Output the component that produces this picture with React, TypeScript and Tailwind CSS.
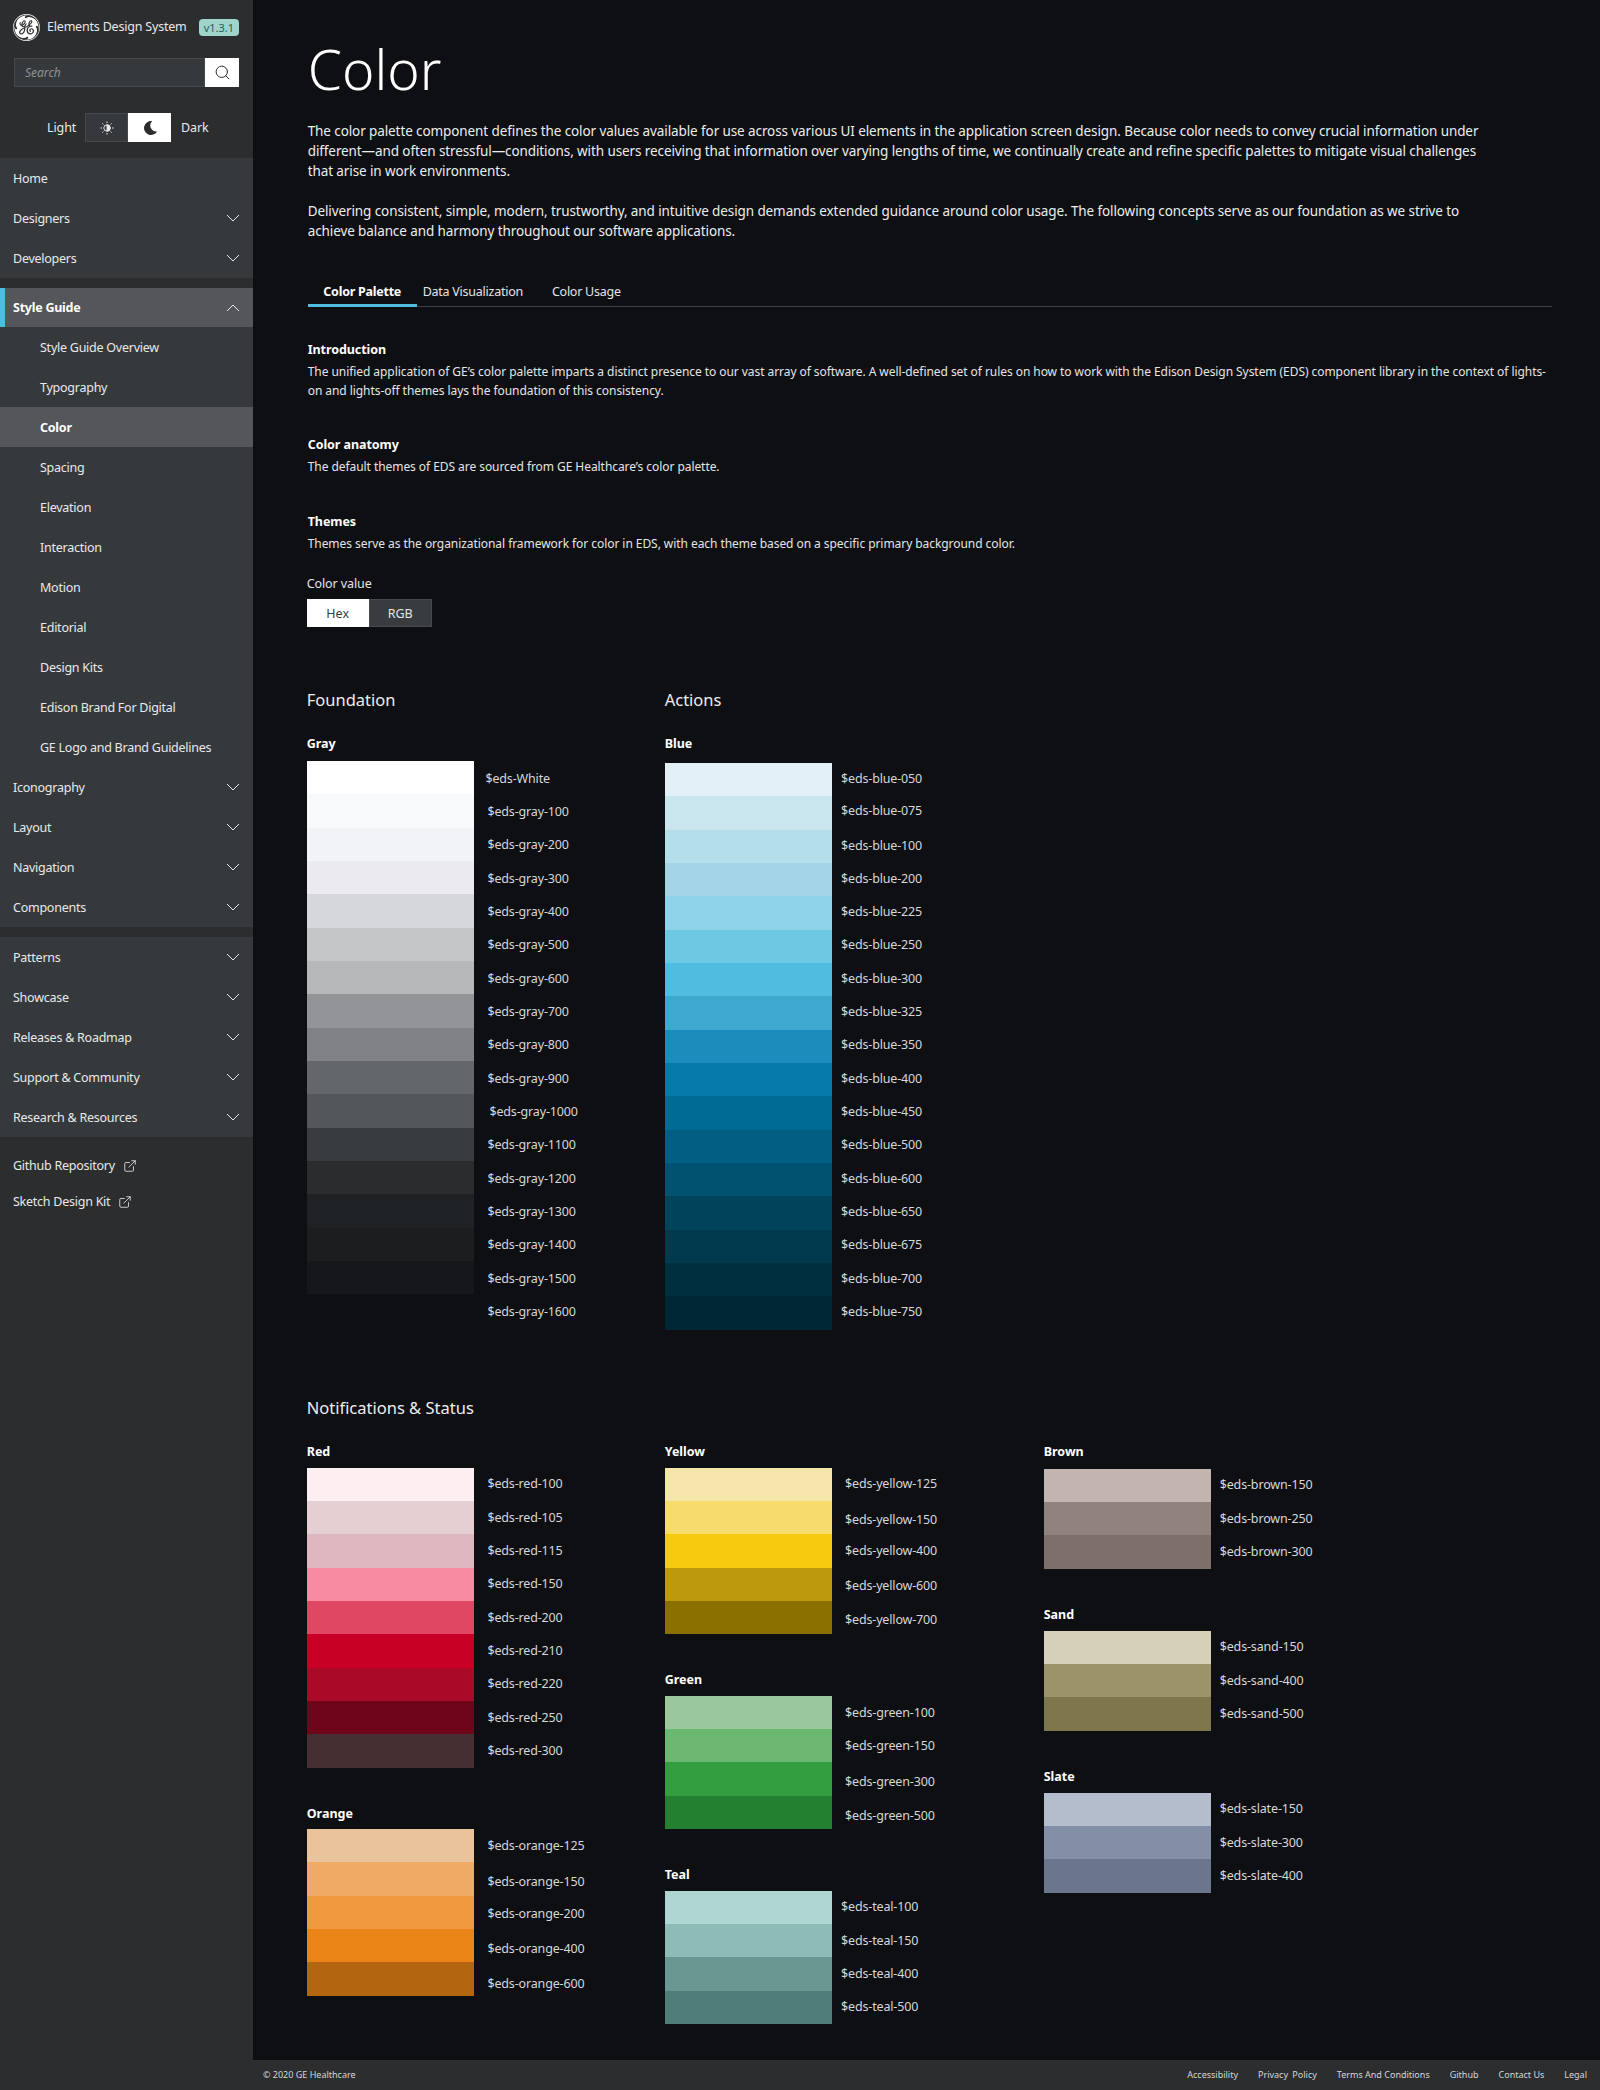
import { ExternalLink, Search } from "lucide-react";
import { SiGeneralelectric } from "react-icons/si";

type Row = [string, string, string?];

const font = "font-['Noto_Sans',sans-serif]";

function Chevron({ up }: { up?: boolean }) {
	return (
		<svg width="14" height="8" viewBox="0 0 14 8" fill="none" stroke="#e6e7e8" strokeWidth="1" className={up ? "rotate-180" : ""}>
			<path d="M1 1 L7 7 L13 1" />
		</svg>
	);
}

function NavRow({ label, open, arrow = true }: { label: string; open?: boolean; arrow?: boolean }) {
	return (
		<div className="flex h-10 items-center justify-between pl-[13px] pr-[13px] text-[12.5px] tracking-[-0.25px] text-[#e8e9ea]">
			<span className="pt-[2px]">{label}</span>
			{arrow && <Chevron up={open} />}
		</div>
	);
}

function SubRow({ label, active }: { label: string; active?: boolean }) {
	return <div className={active ? "flex h-10 items-center bg-[#54565a] pl-10 pt-[2px] text-[12.5px] font-bold tracking-[-0.25px] text-white" : "flex h-10 items-center pl-10 pt-[2px] text-[12.5px] tracking-[-0.25px] text-[#e8e9ea]"}>{label}</div>;
}

function Sidebar() {
	return (
		<aside className="w-[253px] shrink-0 bg-[#2b2d2f]">
			<div className="flex h-[54px] items-center pl-[13px] pr-[14px]">
				<SiGeneralelectric className="size-[27px] text-white" />
				<span className="ml-[7px] text-[12.5px] tracking-[-0.2px] text-[#e8e9ea]">Elements Design System</span>
				<span className="ml-auto rounded-[4px] bg-[#9fd4cd] px-[5px] text-[11px] leading-[17px] text-[#2c5c58]">v1.3.1</span>
			</div>
			<div className="mx-[14px] mt-1 flex h-[29px]">
				<div className="flex flex-1 items-center border border-[#46494c] bg-[#35393c] pl-[10px] text-[12px] italic text-[#8f9295]">Search</div>
				<div className="flex w-[34px] items-center justify-center bg-white">
					<Search size={17} strokeWidth={1.4} className="text-[#2b2d2f]" />
				</div>
			</div>
			<div className="mt-[26px] flex h-[29px] items-center text-[12.5px] tracking-[-0.1px] text-[#e8e9ea]">
				<span className="ml-[47px] w-[38px] pt-px">Light</span>
				<div className="flex h-[29px] w-[43px] items-center justify-center border border-[#46494c] bg-[#35393c]">
					<svg width="14" height="14" viewBox="0 0 14 14" fill="none" stroke="#e8e9ea" strokeWidth="1">
						<circle cx="7" cy="7" r="3.2" />
						<path d="M7 3.8 A3.2 3.2 0 0 1 7 10.2 Z" fill="#e8e9ea" />
						<path d="M7 0.5 V2 M7 12 V13.5 M0.5 7 H2 M12 7 H13.5 M2.4 2.4 L3.4 3.4 M10.6 10.6 L11.6 11.6 M2.4 11.6 L3.4 10.6 M10.6 3.4 L11.6 2.4" />
					</svg>
				</div>
				<div className="flex h-[29px] w-[43px] items-center justify-center bg-white">
					<svg width="16" height="16" viewBox="0 0 14 14" fill="#2b2d2f">
						<path d="M8.8 1 A6.1 6.1 0 1 0 13.2 10 A5.3 5.3 0 0 1 8.8 1 Z" />
					</svg>
				</div>
				<span className="ml-[10px] pt-px">Dark</span>
			</div>
			<div className="mt-4 bg-[#35393c]">
				<NavRow label="Home" arrow={false} />
				<NavRow label="Designers" />
				<NavRow label="Developers" />
			</div>
			<div className="mt-[10px] bg-[#35393c]">
				<div className="flex h-[39px] items-center justify-between border-l-[5px] border-[#4fbce0] bg-[#54565a] pl-2 pr-[13px] text-[12.5px] font-bold tracking-[-0.25px] text-white">
					<span className="pt-[2px]">Style Guide</span>
					<Chevron up />
				</div>
				<SubRow label="Style Guide Overview" />
				<SubRow label="Typography" />
				<SubRow label="Color" active />
				<SubRow label="Spacing" />
				<SubRow label="Elevation" />
				<SubRow label="Interaction" />
				<SubRow label="Motion" />
				<SubRow label="Editorial" />
				<SubRow label="Design Kits" />
				<SubRow label="Edison Brand For Digital" />
				<SubRow label="GE Logo and Brand Guidelines" />
				<NavRow label="Iconography" />
				<NavRow label="Layout" />
				<NavRow label="Navigation" />
				<NavRow label="Components" />
			</div>
			<div className="mt-[10px] bg-[#35393c]">
				<NavRow label="Patterns" />
				<NavRow label="Showcase" />
				<NavRow label="Releases & Roadmap" />
				<NavRow label="Support & Community" />
				<NavRow label="Research & Resources" />
			</div>
			<div className="flex flex-col pl-[13px] pt-[11px] text-[12.5px] tracking-[-0.25px] text-[#e8e9ea]">
				<div className="flex h-[36px] items-center gap-2">
					Github Repository <ExternalLink size={14} strokeWidth={1.4} />
				</div>
				<div className="flex h-[36px] items-center gap-2">
					Sketch Design Kit <ExternalLink size={14} strokeWidth={1.4} />
				</div>
			</div>
		</aside>
	);
}

function Palette({ title, rows, className = "", swatchTop = "mt-[5.5px]", gap = "ml-[13.7px]", labelsUp = "" }: { title: string; rows: Row[]; className?: string; swatchTop?: string; gap?: string; labelsUp?: string }) {
	return (
		<section className={className}>
			<h4 className="h-5 text-[12.5px] font-bold leading-5 text-white">{title}</h4>
			<div className={`flex ${swatchTop}`}>
				<div className="w-[167px] shrink-0">
					{rows.map((r) => (
						<div key={r[1]} className={`h-[33.33px] ${r[0]}`} />
					))}
				</div>
				<div className={`${gap} ${labelsUp}`}>
					{rows.map((r) => (
						<div key={r[1]} className={`flex h-[33.33px] items-center whitespace-nowrap pt-px text-[12.5px] tracking-[-0.15px] text-[#d6d7d9] ${r[2] ?? ""}`}>
							{r[1]}
						</div>
					))}
				</div>
			</div>
		</section>
	);
}

const gray: Row[] = [
	["bg-[#ffffff]", "$eds-White", "-ml-[2px]"],
	["bg-[#f8f9fb]", "$eds-gray-100"],
	["bg-[#f2f3f6]", "$eds-gray-200"],
	["bg-[#ebebef]", "$eds-gray-300"],
	["bg-[#d6d7da]", "$eds-gray-400"],
	["bg-[#c5c6c8]", "$eds-gray-500"],
	["bg-[#b7b8ba]", "$eds-gray-600"],
	["bg-[#929497]", "$eds-gray-700"],
	["bg-[#808285]", "$eds-gray-800"],
	["bg-[#63666a]", "$eds-gray-900"],
	["bg-[#53565a]", "$eds-gray-1000", "ml-[2px]"],
	["bg-[#393c3f]", "$eds-gray-1100"],
	["bg-[#2a2c2e]", "$eds-gray-1200"],
	["bg-[#1f2224]", "$eds-gray-1300"],
	["bg-[#1b1d1f]", "$eds-gray-1400"],
	["bg-[#16171a]", "$eds-gray-1500"],
	["bg-[#0e0f12]", "$eds-gray-1600"],
];

const blue: Row[] = [
	["bg-[#e3f0f7]", "$eds-blue-050"],
	["bg-[#c9e6ef]", "$eds-blue-075", "-translate-y-[1px]"],
	["bg-[#b3deea]", "$eds-blue-100", "translate-y-[1px]"],
	["bg-[#a4d5e6]", "$eds-blue-200"],
	["bg-[#8ed3ea]", "$eds-blue-225"],
	["bg-[#6dc8e4]", "$eds-blue-250"],
	["bg-[#4fbce0]", "$eds-blue-300"],
	["bg-[#3ea8cf]", "$eds-blue-325"],
	["bg-[#1b8cbb]", "$eds-blue-350"],
	["bg-[#057bab]", "$eds-blue-400"],
	["bg-[#006c96]", "$eds-blue-450"],
	["bg-[#005f82]", "$eds-blue-500"],
	["bg-[#005370]", "$eds-blue-600"],
	["bg-[#00435a]", "$eds-blue-650"],
	["bg-[#00384d]", "$eds-blue-675"],
	["bg-[#002f40]", "$eds-blue-700"],
	["bg-[#002736]", "$eds-blue-750"],
];

const red: Row[] = [
	["bg-[#fdeef1]", "$eds-red-100"],
	["bg-[#e6cfd3]", "$eds-red-105"],
	["bg-[#dfb8bf]", "$eds-red-115"],
	["bg-[#f78ca0]", "$eds-red-150"],
	["bg-[#e04763]", "$eds-red-200"],
	["bg-[#c80025]", "$eds-red-210"],
	["bg-[#a80a27]", "$eds-red-220"],
	["bg-[#6e0519]", "$eds-red-250"],
	["bg-[#452f33]", "$eds-red-300"],
];

const orange: Row[] = [
	["bg-[#e8c39c]", "$eds-orange-125"],
	["bg-[#efaa65]", "$eds-orange-150", "translate-y-[2.5px]"],
	["bg-[#f0993f]", "$eds-orange-200", "translate-y-[2px]"],
	["bg-[#ea8416]", "$eds-orange-400", "translate-y-[3px]"],
	["bg-[#b36510]", "$eds-orange-600", "translate-y-[5px]"],
];

const yellow: Row[] = [
	["bg-[#f5e7a9]", "$eds-yellow-125"],
	["bg-[#f7dc6d]", "$eds-yellow-150", "translate-y-[2px]"],
	["bg-[#f6cb0f]", "$eds-yellow-400"],
	["bg-[#bd9a09]", "$eds-yellow-600", "translate-y-[2px]"],
	["bg-[#8b7000]", "$eds-yellow-700", "translate-y-[2px]"],
];

const green: Row[] = [
	["bg-[#9ac89c]", "$eds-green-100"],
	["bg-[#6bb871]", "$eds-green-150"],
	["bg-[#339e40]", "$eds-green-300", "translate-y-[3px]"],
	["bg-[#238030]", "$eds-green-500", "translate-y-[4px]"],
];

const teal: Row[] = [
	["bg-[#b0d6d4]", "$eds-teal-100"],
	["bg-[#8dbcb8]", "$eds-teal-150"],
	["bg-[#699792]", "$eds-teal-400"],
	["bg-[#4f7d79]", "$eds-teal-500"],
];

const brown: Row[] = [
	["bg-[#c2b5af]", "$eds-brown-150"],
	["bg-[#90827d]", "$eds-brown-250"],
	["bg-[#7f6f6a]", "$eds-brown-300"],
];

const sand: Row[] = [
	["bg-[#d6d0b8]", "$eds-sand-150"],
	["bg-[#9c9468]", "$eds-sand-400"],
	["bg-[#7f774c]", "$eds-sand-500"],
];

const slate: Row[] = [
	["bg-[#b4bdcc]", "$eds-slate-150"],
	["bg-[#838fa6]", "$eds-slate-300"],
	["bg-[#69768c]", "$eds-slate-400"],
];

function Intro() {
	return (
		<>
			<h1 className="mt-9 h-[66px] pl-px text-[55px] font-light leading-[66px] text-white">Color</h1>
			<p className="mt-[19px] whitespace-nowrap pl-px text-[13.5px] leading-5 tracking-[-0.1px] text-[#eceded]">
				The color palette component defines the color values available for use across various UI elements in the application screen design. Because color needs to convey crucial information under
				<br />
				different—and often stressful—conditions, with users receiving that information over varying lengths of time, we continually create and refine specific palettes to mitigate visual challenges
				<br />
				that arise in work environments.
			</p>
			<p className="mt-5 whitespace-nowrap pl-px text-[13.5px] leading-5 tracking-[-0.1px] text-[#eceded]">
				Delivering consistent, simple, modern, trustworthy, and intuitive design demands extended guidance around color usage. The following concepts serve as our foundation as we strive to
				<br />
				achieve balance and harmony throughout our software applications.
			</p>
			<div className="ml-px mt-[31px] flex h-[35px] items-stretch border-b border-[#3e4044] text-[12.5px] tracking-[-0.25px] text-[#e4e5e6]">
				<div className="-mb-px flex w-[109px] items-center justify-center border-b-[3px] border-[#4fbce0] pt-[9px] font-bold text-white">Color Palette</div>
				<div className="ml-1.5 flex items-center pt-[6px]">Data Visualization</div>
				<div className="ml-[29px] flex items-center pt-[6px]">Color Usage</div>
			</div>
			<div className="ml-px whitespace-nowrap text-[12px] tracking-[-0.06px] text-[#e4e5e6]">
				<h3 className="mt-[33px] h-5 text-[12.5px] font-bold leading-5 text-white">Introduction</h3>
				<p className="mt-[1.5px] leading-[19px]">
					The unified application of GE’s color palette imparts a distinct presence to our vast array of software. A well-defined set of rules on how to work with the Edison Design System (EDS) component library in the context of lights-
					<br />
					on and lights-off themes lays the foundation of this consistency.
				</p>
				<h3 className="mt-[35.5px] h-5 text-[12.5px] font-bold leading-5 text-white">Color anatomy</h3>
				<p className="mt-[1.5px] leading-[19px]">The default themes of EDS are sourced from GE Healthcare’s color palette.</p>
				<h3 className="mt-[36.5px] h-5 text-[12.5px] font-bold leading-5 text-white">Themes</h3>
				<p className="mt-[1.5px] leading-[19px]">Themes serve as the organizational framework for color in EDS, with each theme based on a specific primary background color.</p>
			</div>
			<div className="mt-[21.5px] h-5 text-[12.5px] leading-5 tracking-[-0.1px] text-[#e4e5e6]">Color value</div>
			<div className="mt-[5px] flex h-7 w-[125px] text-[12.5px]">
				<div className="flex w-[62px] items-center justify-center bg-white pt-[2px] text-[#393c3f]">Hex</div>
				<div className="flex w-[63px] items-center justify-center border border-[#46494c] bg-[#393c3f] pt-[2px] text-[#e4e5e6]">RGB</div>
			</div>
		</>
	);
}

export default function App() {
	return (
		<div className={`flex min-h-[2090px] bg-[#0e0f12] ${font}`}>
			<Sidebar />
			<div className="flex min-w-0 flex-1 flex-col">
				<main className="flex-1 pl-[53.7px] pr-12">
					<Intro />
					<div className="mt-[61px] flex">
						<div className="w-[358px]">
							<h2 className="h-6 text-[16.5px] leading-6 text-[#eceded]">Foundation</h2>
							<Palette className="mt-[22px]" title="Gray" rows={gray} swatchTop="mt-[7px]" labelsUp="mt-[1px]" />
						</div>
						<div>
							<h2 className="h-6 text-[16.5px] leading-6 text-[#eceded]">Actions</h2>
							<Palette className="mt-[22px]" title="Blue" rows={blue} swatchTop="mt-[9px]" gap="ml-[9.3px]" labelsUp="-mt-[1px]" />
						</div>
					</div>
					<h2 className="mt-[66px] h-6 text-[16.5px] leading-6 text-[#eceded]">Notifications &amp; Status</h2>
					<div className="mt-[22.5px] flex">
						<div className="w-[358px]">
							<Palette title="Red" rows={red} />
							<Palette className="mt-9" title="Orange" rows={orange} />
						</div>
						<div className="w-[379px]">
							<Palette title="Yellow" rows={yellow} gap="ml-[13.3px]" />
							<Palette className="mt-9" title="Green" rows={green} gap="ml-[13.3px]" />
							<Palette className="mt-9" title="Teal" rows={teal} gap="ml-[9.3px]" />
						</div>
						<div>
							<Palette title="Brown" rows={brown} swatchTop="mt-[6.5px]" gap="ml-[9px]" />
							<Palette className="mt-9" title="Sand" rows={sand} swatchTop="mt-[6px]" gap="ml-[9px]" />
							<Palette className="mt-9" title="Slate" rows={slate} swatchTop="mt-[6px]" gap="ml-[9px]" />
						</div>
					</div>
				</main>
				<footer className="flex h-[30px] items-center justify-between bg-[#2b2d2f] pl-[10px] pr-[13px] text-[9px] text-[#d6d7d9]">
					<span>© 2020 GE Healthcare</span>
					<div className="flex gap-5">
						<span>Accessibility</span>
						<span className="[word-spacing:2px]">Privacy Policy</span>
						<span>Terms And Conditions</span>
						<span>Github</span>
						<span>Contact Us</span>
						<span>Legal</span>
					</div>
				</footer>
			</div>
		</div>
	);
}
